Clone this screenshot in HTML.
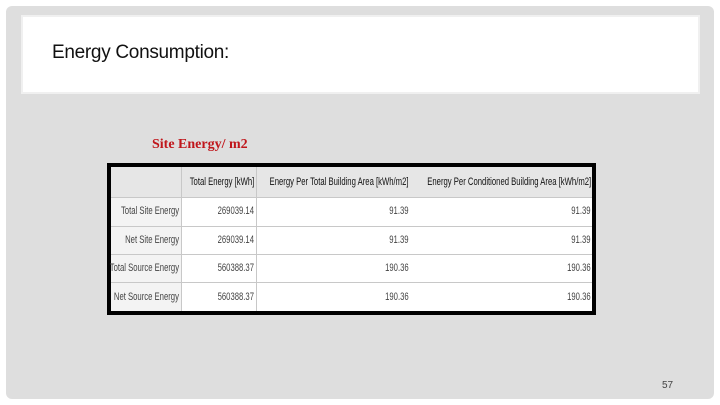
<!DOCTYPE html>
<html><head><style>
body{margin:0;width:720px;height:405px;background:#fff;position:relative;overflow:hidden;font-family:"Liberation Sans",sans-serif}
.panel{position:absolute;left:6px;top:6px;width:708px;height:393px;background:#dedede;border-radius:6px}
.hdr{position:absolute;left:21px;top:15px;width:679px;height:79px;background:#fff;border:2px solid #f0f0f0;box-sizing:border-box}
.title{position:absolute;left:52px;top:42px;font-size:19px;color:#111;letter-spacing:-0.3px}
.sub{position:absolute;left:152px;top:137px;font-family:"Liberation Serif",serif;font-weight:bold;font-size:14px;color:#c0161b}
.tbl{position:absolute;left:107px;top:163px;width:489px;height:152px;background:#000}
.in{position:absolute;left:4px;top:4px;width:481px;height:144px;background:#fff}
.c{position:absolute;font-size:11px;color:#444;white-space:nowrap;transform:scaleX(0.7);transform-origin:right center;text-align:right}
.h{color:#111}
.hl{position:absolute;background:#c8c8c8}
</style></head><body>
<div class="panel"></div>
<div class="hdr"></div>
<div class="title">Energy Consumption:</div>
<div class="sub">Site Energy/ m2</div>
<div class="tbl"><div class="in">
<div style="position:absolute;left:0;top:0;width:481px;height:30px;background:#e6e6e6"></div>
<div style="position:absolute;left:0;top:30px;width:70px;height:114px;background:#f3f3f3"></div>
<div class="hl" style="left:70px;top:0;width:1px;height:144px"></div>
<div class="hl" style="left:145px;top:0;width:1px;height:144px"></div>
<div class="hl" style="left:0;top:30px;width:481px;height:1px"></div>
<div class="hl" style="left:0;top:59px;width:481px;height:1px"></div>
<div class="hl" style="left:0;top:87px;width:481px;height:1px"></div>
<div class="hl" style="left:0;top:115px;width:481px;height:1px"></div>
<div class="c h" style="right:338px;top:9px">Total Energy [kWh]</div>
<div class="c h" style="right:183px;top:9px">Energy Per Total Building Area [kWh/m2]</div>
<div class="c h" style="right:1px;top:9px">Energy Per Conditioned Building Area [kWh/m2]</div>
<div class="c" style="right:413px;top:38px">Total Site Energy</div>
<div class="c" style="right:338px;top:38px">269039.14</div>
<div class="c" style="right:183px;top:38px">91.39</div>
<div class="c" style="right:1px;top:38px">91.39</div>
<div class="c" style="right:413px;top:67px">Net Site Energy</div>
<div class="c" style="right:338px;top:67px">269039.14</div>
<div class="c" style="right:183px;top:67px">91.39</div>
<div class="c" style="right:1px;top:67px">91.39</div>
<div class="c" style="right:413px;top:95px">Total Source Energy</div>
<div class="c" style="right:338px;top:95px">560388.37</div>
<div class="c" style="right:183px;top:95px">190.36</div>
<div class="c" style="right:1px;top:95px">190.36</div>
<div class="c" style="right:413px;top:124px">Net Source Energy</div>
<div class="c" style="right:338px;top:124px">560388.37</div>
<div class="c" style="right:183px;top:124px">190.36</div>
<div class="c" style="right:1px;top:124px">190.36</div>
</div></div>
<div style="position:absolute;left:662px;top:380px;font-size:10px;color:#444">57</div>
</body></html>
